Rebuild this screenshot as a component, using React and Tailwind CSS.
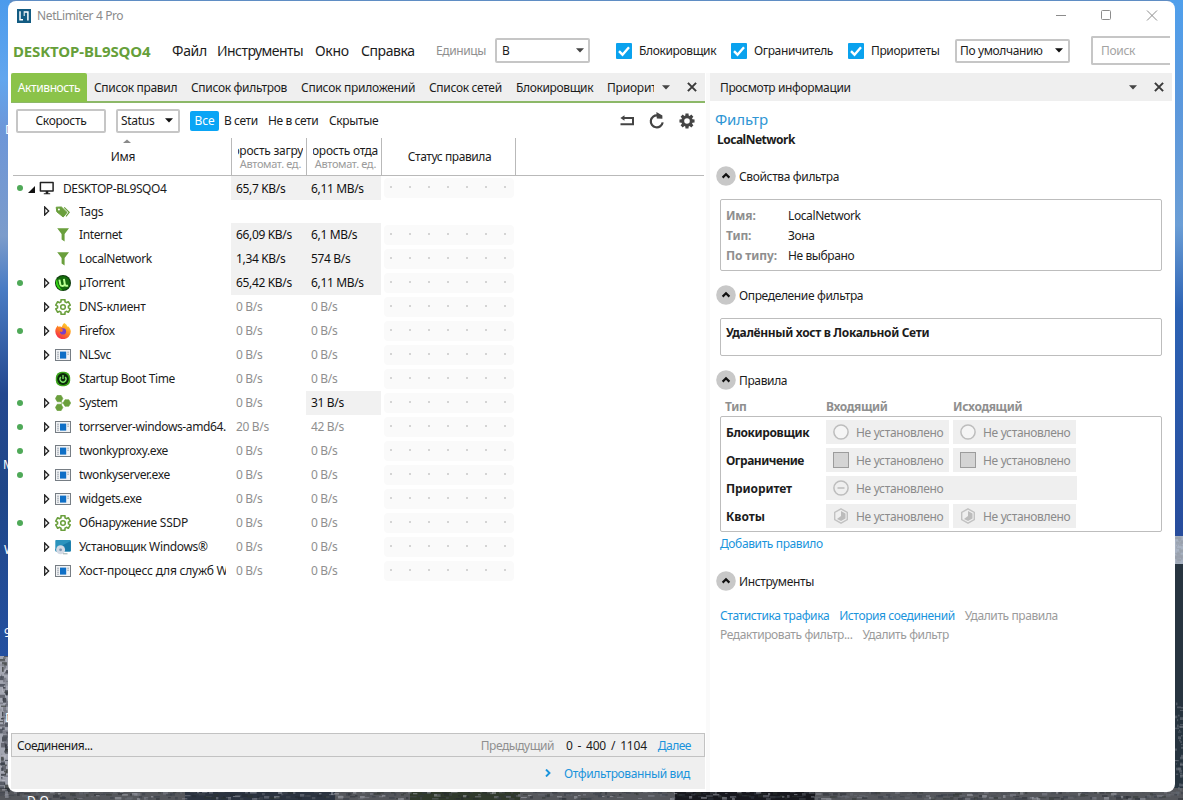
import React from "react";

const GREEN = "#6a9f3c";

function rand(n) {
  const v = Math.sin(n * 127.1 + 3.7) * 43758.5453;
  return v - Math.floor(v);
}

const ROCKS = ["#23282f", "#4a4d55", "#8c8f98", "#b6b8c2", "#343a44", "#6b6e78", "#2d322f"];

function Wallpaper() {
  const bits = [];
  for (let i = 0; i < 500; i++) {
    bits.push(
      <rect
        key={"b" + i}
        x={Math.round(i * 2.4)}
        y={791 + Math.floor(rand(i) * 8)}
        width={2 + rand(i + 9) * 5}
        height={1 + rand(i + 5) * 2}
        fill={ROCKS[Math.floor(rand(i + 77) * 7)]}
        opacity="0.45"
      />
    );
  }
  for (let i = 0; i < 90; i++) {
    bits.push(
      <rect
        key={"l" + i}
        x={Math.floor(rand(i + 3) * 7)}
        y={656 + i * 1.55}
        width={1 + rand(i + 9) * 5}
        height={1 + rand(i + 5) * 4}
        fill={ROCKS[Math.floor(rand(i + 400) * 7)]}
        opacity="0.7"
      />
    );
    bits.push(
      <rect
        key={"r" + i}
        x={1175 + Math.floor(rand(i + 30) * 7)}
        y={(i % 2 ? 536 : 700) + rand(i + 55) * (i % 2 ? 26 : 95)}
        width={1 + rand(i + 9) * 4}
        height={1 + rand(i + 5) * 2}
        fill={i % 2 ? "#9aa0ac" : "#6b717b"}
        opacity="0.6"
      />
    );
  }
  return (
    <svg className="absolute inset-0" width="1183" height="800" viewBox="0 0 1183 800">
      <defs>
        <linearGradient id="skyL" x1="0" y1="0" x2="0" y2="1">
          <stop offset="0" stopColor="#4c9bec" />
          <stop offset="0.12" stopColor="#62a6ee" />
          <stop offset="0.2" stopColor="#6d96d8" />
          <stop offset="0.36" stopColor="#7c9ccb" />
          <stop offset="0.44" stopColor="#4a7cc4" />
          <stop offset="0.6" stopColor="#24488f" />
          <stop offset="0.75" stopColor="#1f4688" />
          <stop offset="1" stopColor="#2450a0" />
        </linearGradient>
        <linearGradient id="skyR" x1="0" y1="0" x2="0" y2="1">
          <stop offset="0" stopColor="#4f9fec" />
          <stop offset="0.2" stopColor="#5c98dc" />
          <stop offset="0.42" stopColor="#6b9ed6" />
          <stop offset="0.58" stopColor="#2c62b4" />
          <stop offset="1" stopColor="#274c9c" />
        </linearGradient>
      </defs>
      <rect x="0" y="0" width="1183" height="800" fill="#5f8dc4" />
      <rect x="0" y="0" width="10" height="656" fill="url(#skyL)" />
      <rect x="1170" y="0" width="13" height="536" fill="url(#skyR)" />
      <rect x="0" y="656" width="20" height="144" fill="#a3a6b1" />
      <rect x="1160" y="536" width="23" height="28" fill="#a9b3c3" />
      <rect x="1160" y="564" width="23" height="236" fill="#27343f" />
      <rect x="0" y="788" width="1183" height="12" fill="#55575c" />
      <rect x="185" y="788" width="150" height="12" fill="#2b3340" />
      <rect x="410" y="788" width="110" height="12" fill="#303a2c" />
      <rect x="675" y="788" width="140" height="12" fill="#17181e" />
      {bits}
      <g fill="#fff" fontFamily="Noto Sans, sans-serif" fontSize="12">
        <text x="5" y="134">D</text>
        <text x="3" y="469">M</text>
        <text x="4" y="554">W</text>
        <text x="4" y="637">9</text>
        <text x="5" y="722">D</text>
        <text x="27" y="805">D-O</text>
      </g>
    </svg>
  );
}

function Caret({ className = "" }) {
  return (
    <svg className={"shrink-0 " + className} width="8" height="5" viewBox="0 0 8 5">
      <path d="M0 0.3H8L4 4.6Z" fill="currentColor" />
    </svg>
  );
}

function Cross() {
  return (
    <svg className="shrink-0" width="10" height="10" viewBox="0 0 10 10">
      <path d="M0.9 0.9L9.1 9.1M9.1 0.9L0.9 9.1" stroke="#3a3a3a" strokeWidth="2" />
    </svg>
  );
}

function Check({ label, className }) {
  return (
    <div className={"flex items-center shrink-0 " + className}>
      <svg className="shrink-0 mr-[7px]" width="16" height="16" viewBox="0 0 16 16">
        <rect width="16" height="16" rx="1" fill="#0aa2ee" />
        <path d="M3 8.2L6.5 11.7L13 4.3" stroke="#fff" strokeWidth="2.4" fill="none" />
      </svg>
      <span className="tracking-[-0.36px]">{label}</span>
    </div>
  );
}

function gearPath(cx, cy, n, r1, r2, a, b) {
  let d = "";
  for (let i = 0; i < n; i++) {
    const t = (i * 2 * Math.PI) / n - Math.PI / 2;
    [[-a, r1], [-b, r2], [b, r2], [a, r1]].forEach(([o, r], k) => {
      d += (i === 0 && k === 0 ? "M" : "L") + (cx + r * Math.cos(t + o)).toFixed(2) + " " + (cy + r * Math.sin(t + o)).toFixed(2);
    });
  }
  return d + "Z";
}

const ICONS = {
  monitor: (
    <svg width="16" height="16" viewBox="0 0 16 16">
      <path d="M1.4 2.4H14.1V11.1H1.4Z" stroke="#222" strokeWidth="1.5" fill="none" strokeLinejoin="round" />
      <path d="M6.7 11H9.3V13.2H11.2V14.3H4.8V13.2H6.7Z" fill="#222" />
    </svg>
  ),
  tags: (
    <svg width="16" height="16" viewBox="0 0 16 16">
      <path d="M1.2 3.2L6.4 3L12 8.4L8.2 13L1.8 7.8Z" fill={GREEN} stroke={GREEN} strokeWidth="1" strokeLinejoin="round" />
      <circle cx="3.9" cy="5.4" r="1" fill="#fff" />
      <path d="M9.2 3.4L14.2 8.3L11 12.4" fill="none" stroke={GREEN} strokeWidth="1.2" />
    </svg>
  ),
  funnel: (
    <svg width="16" height="16" viewBox="0 0 16 16">
      <path d="M2.2 1.2H14L9.6 6.9V14.6L6.6 12.4V6.9Z" fill={GREEN} />
    </svg>
  ),
  utorrent: (
    <svg width="16" height="16" viewBox="0 0 16 16">
      <circle cx="8" cy="8" r="8" fill="#0c3a0a" />
      <circle cx="8" cy="8" r="6.9" fill="#146b0c" />
      <path d="M2 3.4A8 8 0 0 0 8 15.4C4 13 2.5 8 2 3.4Z" fill="#33d113" />
      <path d="M4.4 4.6L5.3 9.4C5.7 11.6 9 11.6 9.7 9.6M8.9 3.8L9.8 9.2C10.1 10.8 11.6 11.2 13 10.4" stroke="#b9ff8f" strokeWidth="2" fill="none" />
    </svg>
  ),
  gear: (
    <svg width="16" height="16" viewBox="0 0 16 16">
      <path d={gearPath(8, 8, 6, 5.5, 7.5, 0.38, 0.26)} stroke={GREEN} strokeWidth="1.6" fill="none" strokeLinejoin="round" />
      <circle cx="8" cy="8" r="2.3" stroke={GREEN} strokeWidth="1.5" fill="none" />
    </svg>
  ),
  firefox: (
    <svg width="16" height="16" viewBox="0 0 16 16">
      <defs>
        <linearGradient id="fox" x1="0.85" y1="0" x2="0.2" y2="1">
          <stop offset="0" stopColor="#ffe23c" />
          <stop offset="0.45" stopColor="#ff8a1e" />
          <stop offset="1" stopColor="#f3224e" />
        </linearGradient>
      </defs>
      <path d="M9.3 0C11.4 1.2 12 2.6 12.3 3.4L13.4 3.6C15 5.2 15.8 6.8 15.8 8.6A7.7 7.5 0 0 1 .3 8.6C.3 6.6 1 4.9 2.1 3.6L2.3 2.4L3.6 3.8C5 3.2 6.2 3.5 6.9 4.1C7.3 2.4 8 1 9.3 0Z" fill="url(#fox)" />
      <circle cx="8" cy="8.4" r="3.1" fill="#7a3fc8" />
      <path d="M3.6 6C5.6 5.5 7.4 6 8.4 7.2C7.2 7.4 6.9 8.2 7.4 9C5.6 9.4 4 8 3.6 6Z" fill="#ff7a1c" />
    </svg>
  ),
  app: (
    <svg width="16" height="16" viewBox="0 0 16 16">
      <rect x="0.5" y="2.5" width="15" height="11" fill="#f1f3f5" stroke="#767d84" />
      <rect x="5" y="4.6" width="6.2" height="7" fill="#0f6fc6" />
      <path d="M2 5.2H4M2 7.2H4M2 9.2H4M2 11.2H4M12.2 5.2H14M12.2 7.2H14" stroke="#9aa3ab" strokeWidth="0.9" />
    </svg>
  ),
  power: (
    <svg width="16" height="16" viewBox="0 0 16 16">
      <rect x="0.8" y="0.8" width="14.4" height="14.4" rx="6" fill="#3aa31a" />
      <circle cx="8" cy="8" r="5.9" fill="#0a2a0a" />
      <path d="M5.8 6A3 3 0 1 0 10.2 6M8 3.9V8" stroke="#7fe86a" strokeWidth="1.3" fill="none" />
    </svg>
  ),
  system: (
    <svg width="16" height="16" viewBox="0 0 16 16">
      <path d="M5 4L7 8L5 12M7 8H12" stroke="#8db36c" strokeWidth="0.9" fill="none" />
      <path d="M2.3 0.2H6L7.9 3.5L6 6.8H2.3L.4 3.5Z M2.3 9.2H6L7.9 12.5L6 15.8H2.3L.4 12.5Z M10 4.7H13.8L15.7 8L13.8 11.3H10L8.1 8Z" fill={GREEN} stroke={GREEN} strokeWidth="0.6" strokeLinejoin="round" />
    </svg>
  ),
  installer: (
    <svg width="16" height="16" viewBox="0 0 16 16">
      <rect x="0.3" y="1" width="15.5" height="11.5" rx="0.8" fill="#2b93bd" />
      <path d="M.3 10L15.8 2V11.7Q15.8 12.5 15 12.5H1Z" fill="#1679a8" />
      <circle cx="5.6" cy="10.8" r="4.5" fill="#d3dae4" />
      <circle cx="5.6" cy="10.8" r="1.4" fill="#7f96b4" />
      <path d="M8 14.8H12.5" stroke="#9aa" strokeWidth="1" />
    </svg>
  ),
};

const LATIN = "tracking-[-0.38px]";
const CYR = "tracking-[-0.22px]";

const ROWS = [
  { n: "Tags", i: "tags", e: 1, h: "h-[23px]", t: LATIN },
  { n: "Internet", i: "funnel", t: LATIN, a: "66,09 KB/s", b: "6,1 MB/s", hot: 3 },
  { n: "LocalNetwork", i: "funnel", t: LATIN, a: "1,34 KB/s", b: "574 B/s", hot: 3 },
  { n: "µTorrent", i: "utorrent", e: 1, d: 1, t: LATIN, a: "65,42 KB/s", b: "6,11 MB/s", hot: 3 },
  { n: "DNS-клиент", i: "gear", e: 1, t: CYR, a: "0 B/s", b: "0 B/s" },
  { n: "Firefox", i: "firefox", e: 1, d: 1, t: LATIN, a: "0 B/s", b: "0 B/s" },
  { n: "NLSvc", i: "app", e: 1, t: LATIN, a: "0 B/s", b: "0 B/s" },
  { n: "Startup Boot Time", i: "power", t: LATIN, a: "0 B/s", b: "0 B/s" },
  { n: "System", i: "system", e: 1, d: 1, t: LATIN, a: "0 B/s", b: "31 B/s", hot: 2 },
  { n: "torrserver-windows-amd64.", i: "app", e: 1, d: 1, t: LATIN, a: "20 B/s", b: "42 B/s" },
  { n: "twonkyproxy.exe", i: "app", e: 1, d: 1, t: LATIN, a: "0 B/s", b: "0 B/s" },
  { n: "twonkyserver.exe", i: "app", e: 1, d: 1, t: LATIN, a: "0 B/s", b: "0 B/s" },
  { n: "widgets.exe", i: "app", e: 1, t: LATIN, a: "0 B/s", b: "0 B/s" },
  { n: "Обнаружение SSDP", i: "gear", e: 1, d: 1, t: CYR, a: "0 B/s", b: "0 B/s" },
  { n: "Установщик Windows®", i: "installer", e: 1, t: "tracking-[-0.34px]", a: "0 B/s", b: "0 B/s" },
  { n: "Хост-процесс для служб W", i: "app", e: 1, t: CYR, a: "0 B/s", b: "0 B/s" },
];

function Dot({ on }) {
  return <span className={"w-[6px] h-[6px] rounded-full shrink-0 " + (on ? "bg-[#4fa958]" : "")} />;
}

function Speed({ v, hot, className = "" }) {
  return (
    <div className={"h-full w-[75px] shrink-0 flex items-center pl-[5px] tracking-[-0.34px] " + (hot ? "bg-[#f1f1f1] text-[#111] " : "text-[#8f8f8f] ") + className}>
      {v}
    </div>
  );
}

function StatusDots() {
  return (
    <div className="flex items-center justify-between w-[130px] h-[20px] ml-[3px] pl-[6px] pr-[8px] pb-[2px] bg-[#fafafa] rounded-sm shrink-0">
      {[0, 1, 2, 3, 4, 5, 6].map((k) => (
        <span key={k} className="w-[2px] h-[2px] bg-[#d4d4d4]" />
      ))}
    </div>
  );
}

function TreeRow({ r }) {
  return (
    <div className={"flex items-center " + (r.h || "h-[24px]")}>
      <div className="flex items-center w-[220px] shrink-0 pl-[6px]">
        <Dot on={r.d} />
        <span className="w-[8px] ml-[20px] mr-[4px] shrink-0">
          {r.e && (
            <svg width="8" height="10" viewBox="0 0 8 10" className="block -mt-px">
              <path d="M1.7 1L5.7 5L1.7 9Z" fill="#fff" stroke="#222" strokeWidth="1.3" />
            </svg>
          )}
        </span>
        <span className="w-[16px] shrink-0 mr-[8px]">{ICONS[r.i]}</span>
        <span className={"w-[147px] overflow-hidden whitespace-nowrap " + r.t}>{r.n}</span>
      </div>
      {r.a && (
        <>
          <Speed v={r.a} hot={r.hot & 1} />
          <Speed v={r.b} hot={r.hot & 2} />
          <StatusDots />
        </>
      )}
    </div>
  );
}

function Section({ title, className }) {
  return (
    <div className={"flex items-center h-[20px] ml-[6px] " + className}>
      <svg width="20" height="20" viewBox="0 0 20 20" className="shrink-0 mr-[3px]">
        <circle cx="10" cy="10" r="9.8" fill="#c8c8c8" />
        <path d="M6.6 11.6L10 8.3L13.4 11.6" stroke="#111" strokeWidth="2.2" fill="none" />
      </svg>
      <span className="pt-[2px] tracking-[-0.36px]">{title}</span>
    </div>
  );
}

const RULE_ICONS = {
  circle: <circle cx="8" cy="8" r="7.1" fill="#f5f5f5" stroke="#bdbdbd" strokeWidth="1.5" />,
  square: <rect x="0.5" y="0.5" width="15" height="15" fill="#d4d4d4" stroke="#9c9c9c" />,
  minus: (
    <>
      <circle cx="8" cy="8" r="7.1" fill="none" stroke="#bdbdbd" strokeWidth="1.5" />
      <path d="M4.5 8H11.5" stroke="#bdbdbd" strokeWidth="1.5" />
    </>
  ),
  hex: (
    <>
      <path d="M8 0.9L14.3 4.4V11.6L8 15.1L1.7 11.6V4.4Z" fill="none" stroke="#c2c2c2" strokeWidth="1.4" />
      <path d="M8 3L12.5 5.5V10.5L8 13L4 11L8 8Z" fill="#bcbcbc" />
    </>
  ),
};

function Rule({ icon, wide }) {
  return (
    <div className={"flex items-center h-[24px] bg-[#efefef] pl-[7px] text-[#8b8b8b] " + (wide ? "w-[251px]" : "w-[123px]")}>
      <svg width="16" height="16" viewBox="0 0 16 16" className="shrink-0 mr-[7px]">
        {RULE_ICONS[icon]}
      </svg>
      <span className="pt-[2px] tracking-[-0.33px]">Не установлено</span>
    </div>
  );
}

const RULES = [
  ["Блокировщик", "circle", "tracking-[-0.38px]"],
  ["Ограничение", "square", "tracking-[-0.5px]"],
  ["Приоритет", "minus", "tracking-[-0.1px]"],
  ["Квоты", "hex", ""],
];

function TitleBar() {
  return (
    <div className="flex items-center h-[30px] pl-[9px] pr-[17px] shrink-0">
      <svg width="14" height="14" viewBox="0 0 14 14" className="shrink-0 mr-[6px]">
        <rect width="14" height="14" fill="#125b82" />
        <path d="M3 2.2V10.8H6M7.4 2.9H10.9V11.6" stroke="#fff" strokeWidth="1.5" fill="none" />
        <path d="M7.2 2.2V7" stroke="#fff" strokeWidth="1" />
      </svg>
      <span className="text-[#8b8b8b] tracking-[-0.38px] grow">NetLimiter 4 Pro</span>
      <svg width="102" height="12" viewBox="0 0 102 12" className="shrink-0">
        <path d="M0 5.5H10" stroke="#8c8c8c" />
        <rect x="45.5" y="0.5" width="9" height="9" rx="1" fill="none" stroke="#8c8c8c" />
        <path d="M91 0.5L101 10.5M101 0.5L91 10.5" stroke="#8c8c8c" />
      </svg>
    </div>
  );
}

function MenuBar() {
  return (
    <div className="flex items-center h-[42px] pl-[5px] pr-[5px] pb-[3px] shrink-0 whitespace-nowrap">
      <span className="w-[159px] shrink-0 font-bold text-[15px] text-[#669f3a] tracking-[-0.13px]">DESKTOP-BL9SQO4</span>
      <div className="flex text-[14px] shrink-0">
        <span className="w-[45px] tracking-[-0.3px]">Файл</span>
        <span className="w-[98px] tracking-[-0.55px]">Инструменты</span>
        <span className="w-[46px] tracking-[-0.3px]">Окно</span>
        <span className="w-[75px] tracking-[-0.42px]">Справка</span>
      </div>
      <span className="w-[59px] shrink-0 text-[#8f8f8f] tracking-[-0.4px]">Единицы</span>
      <div className="flex items-center justify-between w-[95px] h-[25px] border-2 border-[#c6c6c6] rounded-[2px] pl-[5px] pr-[4px] shrink-0">
        <span>B</span>
        <Caret className="text-[#444]" />
      </div>
      <Check label="Блокировщик" className="ml-[26px] w-[115px]" />
      <Check label="Ограничитель" className="w-[117px]" />
      <Check label="Приоритеты" className="w-[107px]" />
      <div className="flex items-center justify-between w-[115px] h-[24px] border-2 border-[#c6c6c6] rounded-[2px] pl-[3px] pr-[5px] shrink-0">
        <span className="tracking-[-0.36px]">По умолчанию</span>
        <Caret className="text-[#111]" />
      </div>
      <div className="flex items-center grow h-[29px] ml-[21px] border-2 border-r-0 border-[#c6c6c6] rounded-l-[2px] pl-[8px] text-[#a3a3a3] tracking-[-0.3px]">
        Поиск
      </div>
    </div>
  );
}

function Tabs() {
  return (
    <div className="flex items-center h-[30px] bg-[#efefef] border-b-2 border-[#8cb868] shrink-0 whitespace-nowrap tracking-[-0.32px]">
      <div className="flex items-center justify-center w-[76px] h-[29px] mt-px pt-px bg-[#8bc34a] text-white rounded-t-[2px] shrink-0 tracking-[-0.4px]">Активность</div>
      <div className="flex pt-[2px]">
        <span className="ml-[7px] w-[97px] shrink-0">Список правил</span>
        <span className="w-[110px] shrink-0">Список фильтров</span>
        <span className="w-[128px] shrink-0 tracking-[-0.26px]">Список приложений</span>
        <span className="w-[87px] shrink-0">Список сетей</span>
        <span className="w-[91px] shrink-0 tracking-[-0.36px]">Блокировщик</span>
        <span className="w-[47px] overflow-hidden shrink-0 tracking-[-0.2px]">Приорит</span>
      </div>
      <Caret className="text-[#444] ml-[8px] mr-[17px]" />
      <Cross />
    </div>
  );
}

function Toolbar() {
  return (
    <div className="flex items-center h-[35px] pl-[5px] shrink-0 whitespace-nowrap">
      <div className="flex items-center justify-center w-[90px] h-[24px] border-2 border-[#c6c6c6] rounded-[2px] mr-[10px] tracking-[-0.3px]">Скорость</div>
      <div className="flex items-center justify-between w-[64px] h-[24px] border-2 border-[#c6c6c6] rounded-[2px] pl-[3px] pr-[5px] mr-[10px]">
        <span className="tracking-[-0.3px]">Status</span>
        <Caret className="text-[#111]" />
      </div>
      <div className="flex items-center justify-center w-[29px] h-[20px] bg-[#0aa5f5] text-white rounded-[2px] mr-[5px]">Все</div>
      <span className="w-[44px] tracking-[-0.4px]">В сети</span>
      <span className="w-[61px] tracking-[-0.4px]">Не в сети</span>
      <span className="w-[291px] tracking-[-0.36px]">Скрытые</span>
      <svg width="14" height="12" viewBox="0 0 14 12" className="mr-[15px]">
        <path d="M4 3H13V9.2H0.5" stroke="#444" strokeWidth="2" fill="none" />
        <path d="M0.4 3L4.5 0.2V5.8Z" fill="#444" />
      </svg>
      <svg width="16" height="17" viewBox="0 0 16 17" className="mr-[14px]">
        <path d="M13.7 10.4A6 6 0 1 1 8.6 3.4" stroke="#444" strokeWidth="2.2" fill="none" />
        <path d="M7.4 0L13.4 3.6V6.8L7.8 6.6Z" fill="#444" />
      </svg>
      <svg width="16" height="16" viewBox="0 0 16 16">
        <path fillRule="evenodd" d={gearPath(8, 8, 8, 5.7, 7.7, 0.3, 0.2) + "M8 5.2A2.8 2.8 0 1 0 8 10.8A2.8 2.8 0 1 0 8 5.2Z"} fill="#444" />
      </svg>
    </div>
  );
}

function TableHead() {
  return (
    <div className="flex h-[38px] ml-[2px] mr-[1px] border-b border-[#b9b9b9] shrink-0 whitespace-nowrap">
      <div className="flex flex-col items-center w-[219px] border-r border-[#b9b9b9] pt-px">
        <svg width="8" height="4" viewBox="0 0 8 4" className="ml-[9px]">
          <path d="M0 4L4 0.4L8 4Z" fill="#8a8a8a" />
        </svg>
        <span className="mt-[6px] ml-[2px] tracking-[-0.2px]">Имя</span>
      </div>
      {["орость загру", "орость отда"].map((t) => (
        <div key={t} className="flex flex-col items-end w-[75px] border-r border-[#b9b9b9] pt-[5px] pr-[3px]">
          <div className="w-[65px] h-[16px] leading-[16px] overflow-hidden flex justify-end tracking-[-0.25px]">
            <span>{t}</span>
          </div>
          <span className="text-[11px] leading-[13px] -mt-[2px] mr-[2px] text-[#9b9b9b] tracking-[-0.35px]">Автомат. ед.</span>
        </div>
      ))}
      <div className="flex justify-center w-[134px] border-r border-[#b9b9b9] pt-[11px] pl-[2px] tracking-[-0.42px]">Статус правила</div>
    </div>
  );
}

function LeftPanel() {
  return (
    <div className="flex flex-col w-[694px] shrink-0">
      <Tabs />
      <Toolbar />
      <TableHead />
      <div className="flex items-center h-[24px]">
        <div className="flex items-center w-[220px] shrink-0 pl-[6px]">
          <Dot on />
          <svg width="7" height="7" viewBox="0 0 7 7" className="ml-[5px] mr-[4px] mt-[3px]">
            <path d="M7 0V7H0Z" fill="#111" />
          </svg>
          <span className="mr-[8px]">{ICONS.monitor}</span>
          <span className="pt-[2px] tracking-[-0.4px]">DESKTOP-BL9SQO4</span>
        </div>
        <Speed v="65,7 KB/s" hot className="pt-[2px]" />
        <Speed v="6,11 MB/s" hot className="pt-[2px]" />
        <StatusDots />
      </div>
      {ROWS.map((r) => (
        <TreeRow key={r.n} r={r} />
      ))}
      <div className="grow" />
      <div className="flex items-center h-[24px] bg-[#efefef] border border-[#c2c2c2] pl-[5px] pr-[13px] pt-[2px] shrink-0">
        <span className="grow tracking-[-0.45px]">Соединения...</span>
        <span className="text-[#8f8f8f] mr-[12px] tracking-[-0.5px]">Предыдущий</span>
        <span className="mr-[11px] [word-spacing:2px] tracking-[-0.2px]">0 - 400 / 1104</span>
        <span className="text-[#1a94dc] tracking-[-0.5px]">Далее</span>
      </div>
      <div className="flex items-center justify-end h-[32px] bg-[#efefef] pr-[15px] mb-[3px] shrink-0 text-[#1a94dc]">
        <svg width="6" height="8" viewBox="0 0 6 8" className="mr-[13px]">
          <path d="M1 0.5L4.5 4L1 7.5" stroke="#1a94dc" strokeWidth="1.9" fill="none" />
        </svg>
        <span className="pt-[2px] tracking-[-0.37px]">Отфильтрованный вид</span>
      </div>
    </div>
  );
}

function RightPanel() {
  return (
    <div className="flex flex-col w-[462px] shrink-0 whitespace-nowrap">
      <div className="flex items-center h-[28px] bg-[#efefef] pl-[10px] pr-[8px] shrink-0">
        <span className="grow pt-[2px] tracking-[-0.37px]">Просмотр информации</span>
        <Caret className="text-[#444] mr-[17px]" />
        <Cross />
      </div>
      <div className="mt-[8px] ml-[5px] h-[21px] leading-[20px] text-[15px] tracking-[-0.15px] text-[#2f96d4]">Фильтр</div>
      <div className="ml-[7px] h-[20px] leading-[20px] font-bold tracking-[-0.5px]">LocalNetwork</div>

      <Section title="Свойства фильтра" className="mt-[16px]" />
      <div className="mt-[13px] ml-[10px] w-[442px] h-[72px] border border-[#bdbdbd] rounded-[2px] pt-[6px] pl-[5px] leading-[20px]">
        {[["Имя:", "LocalNetwork"], ["Тип:", "Зона"], ["По типу:", "Не выбрано"]].map(([a, b]) => (
          <div key={a} className="flex">
            <span className="w-[62px] font-bold text-[#8f8f8f] tracking-[-0.12px]">{a}</span>
            <span className="tracking-[-0.4px]">{b}</span>
          </div>
        ))}
      </div>

      <Section title="Определение фильтра" className="mt-[14px]" />
      <div className="mt-[13px] ml-[10px] w-[442px] h-[38px] border border-[#bdbdbd] rounded-[2px] pt-[4px] pl-[5px] leading-[20px] font-bold tracking-[-0.33px]">
        Удалённый хост в Локальной Сети
      </div>

      <Section title="Правила" className="mt-[14px]" />
      <div className="flex mt-[7px] h-[19px] leading-[19px] pl-[15px] font-bold text-[#8f8f8f] tracking-[-0.35px]">
        <span className="w-[101px]">Тип</span>
        <span className="w-[127px]">Входящий</span>
        <span>Исходящий</span>
      </div>
      <div className="flex flex-col gap-[4px] ml-[10px] w-[442px] h-[116px] border border-[#bdbdbd] rounded-[2px] pt-[3px] pl-[5px]">
        {RULES.map(([name, icon, t]) => (
          <div key={name} className="flex items-center h-[24px]">
            <span className={"w-[100px] pt-[2px] font-bold " + t}>{name}</span>
            {icon === "minus" ? (
              <Rule icon={icon} wide />
            ) : (
              <div className="flex gap-[4px]">
                <Rule icon={icon} />
                <Rule icon={icon} />
              </div>
            )}
          </div>
        ))}
      </div>
      <div className="mt-[2px] ml-[10px] h-[21px] leading-[20px] text-[#1a94dc] tracking-[-0.38px]">Добавить правило</div>

      <Section title="Инструменты" className="mt-[16px]" />
      <div className="mt-[15px] ml-[10px] leading-[19px] tracking-[-0.4px]">
        <div className="flex gap-[10px]">
          <span className="text-[#1a94dc]">Статистика трафика</span>
          <span className="text-[#1a94dc]">История соединений</span>
          <span className="text-[#9b9b9b]">Удалить правила</span>
        </div>
        <div className="flex gap-[10px] text-[#9b9b9b]">
          <span>Редактировать фильтр...</span>
          <span>Удалить фильтр</span>
        </div>
      </div>
    </div>
  );
}

export default function App() {
  return (
    <div className="relative w-[1183px] h-[800px] overflow-hidden pt-px pl-[8px] font-['Noto_Sans',sans-serif] text-[12px] leading-[16px] text-[#1c1c1c]">
      <Wallpaper />
      <div className="relative flex flex-col w-[1167px] h-[791px] bg-white rounded-[8px] overflow-hidden">
        <TitleBar />
        <MenuBar />
        <div className="flex grow pl-[3px]">
          <LeftPanel />
          <div className="w-[4px] ml-px bg-[#fafafa] shrink-0" />
          <RightPanel />
        </div>
      </div>
    </div>
  );
}
